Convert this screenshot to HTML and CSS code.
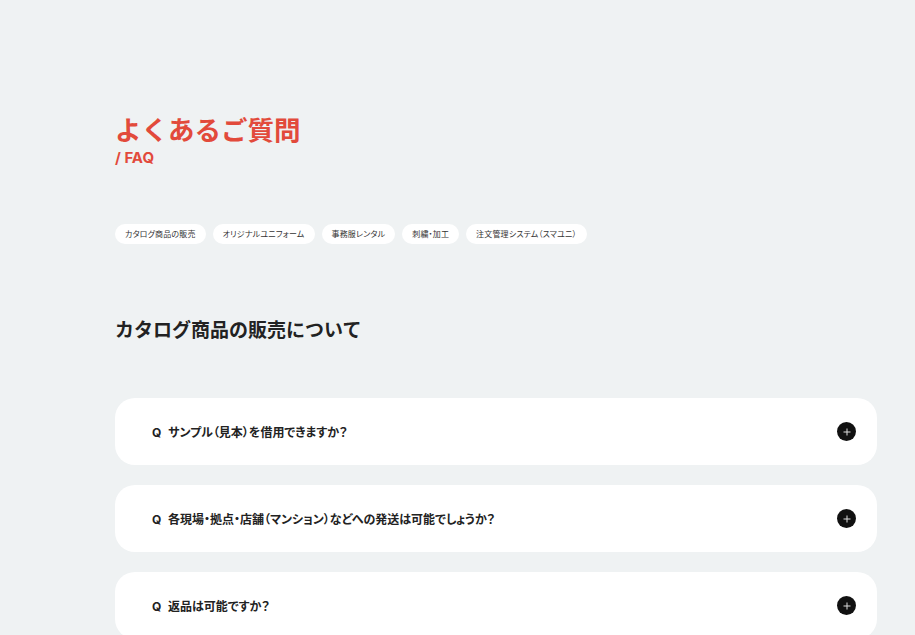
FILE: index.html
```html
<!DOCTYPE html>
<html lang="ja">
<head>
    <meta charset="UTF-8">
    <meta name="viewport" content="width=device-width, initial-scale=1.0">
    <title>よくあるご質問 / FAQ</title>
    <link rel="stylesheet" href="styles.css">
</head>
<body>
    <main class="faq">
        <header class="faq-head">
            <h1 class="faq-title">よくあるご質問</h1>
            <p class="faq-sub">/ FAQ</p>
        </header>

        <nav class="faq-tabs">
            <a class="tab" href="#catalog">カタログ商品の販売</a>
            <a class="tab" href="#original">オリジナルユニフォーム</a>
            <a class="tab" href="#rental">事務服レンタル</a>
            <a class="tab" href="#embroidery">刺繍・加工</a>
            <a class="tab" href="#system">注文管理システム（スマユニ）</a>
        </nav>

        <section class="faq-section" id="catalog">
            <h2 class="section-title">カタログ商品の販売について</h2>

            <div class="qa-list">
                <div class="qa">
                    <p class="qa-q"><span class="q-mark">Q</span>サンプル（見本）を借用できますか？</p>
                    <span class="qa-toggle"></span>
                </div>
                <div class="qa">
                    <p class="qa-q"><span class="q-mark">Q</span>各現場・拠点・店舗（マンション）などへの発送は可能でしょうか？</p>
                    <span class="qa-toggle"></span>
                </div>
                <div class="qa">
                    <p class="qa-q"><span class="q-mark">Q</span>返品は可能ですか？</p>
                    <span class="qa-toggle"></span>
                </div>
            </div>
        </section>
    </main>
</body>
</html>
```

FILE: styles.css
```css
* {
    box-sizing: border-box;
}

body {
    margin: 0;
    background: #eff2f3;
    color: #222;
    font-family: "Noto Sans CJK JP", "Noto Sans", sans-serif;
}

.faq {
    padding: 109px 38px 0 115px;
}

.faq-title {
    margin: 0;
    font-size: 26.5px;
    line-height: 40px;
    font-weight: 700;
    color: #e24a3b;
}

.faq-sub {
    margin: 0;
    font-size: 15px;
    line-height: 18px;
    font-weight: 700;
    color: #e24a3b;
    font-family: "Inter", "Noto Sans CJK JP", sans-serif;
}

/* category pills */
.faq-tabs {
    display: flex;
    gap: 7px;
    margin-top: 57px;
}

.tab {
    display: inline-block;
    height: 20px;
    padding: 0 10px;
    border-radius: 10px;
    background: #fff;
    color: #333;
    font-size: 8px;
    line-height: 20px;
    letter-spacing: 0.02em;
    font-feature-settings: "palt";
    text-decoration: none;
}

.faq-section {
    margin-top: 70px;
}

.section-title {
    margin: 0;
    font-size: 19px;
    line-height: 30px;
    font-weight: 700;
    color: #222;
}

.qa-list {
    display: flex;
    flex-direction: column;
    gap: 20px;
    margin-top: 54px;
}

.qa {
    display: flex;
    align-items: center;
    justify-content: space-between;
    height: 67px;
    padding: 0 21px 0 37px;
    background: #fff;
    border-radius: 20px;
}

.qa-q {
    margin: 0;
    font-size: 12px;
    font-weight: 700;
    color: #222;
    font-feature-settings: "palt";
}

.q-mark {
    display: inline-block;
    width: 16px;
    font-family: "Inter", sans-serif;
}

.qa-toggle {
    position: relative;
    width: 19px;
    height: 19px;
    border-radius: 50%;
    background: #111;
}

.qa-toggle::before,
.qa-toggle::after {
    content: "";
    position: absolute;
    left: 50%;
    top: 50%;
    background: #ddd;
    transform: translate(-50%, -50%);
}

.qa-toggle::before {
    width: 7px;
    height: 1px;
}

.qa-toggle::after {
    width: 1px;
    height: 7px;
}
```
